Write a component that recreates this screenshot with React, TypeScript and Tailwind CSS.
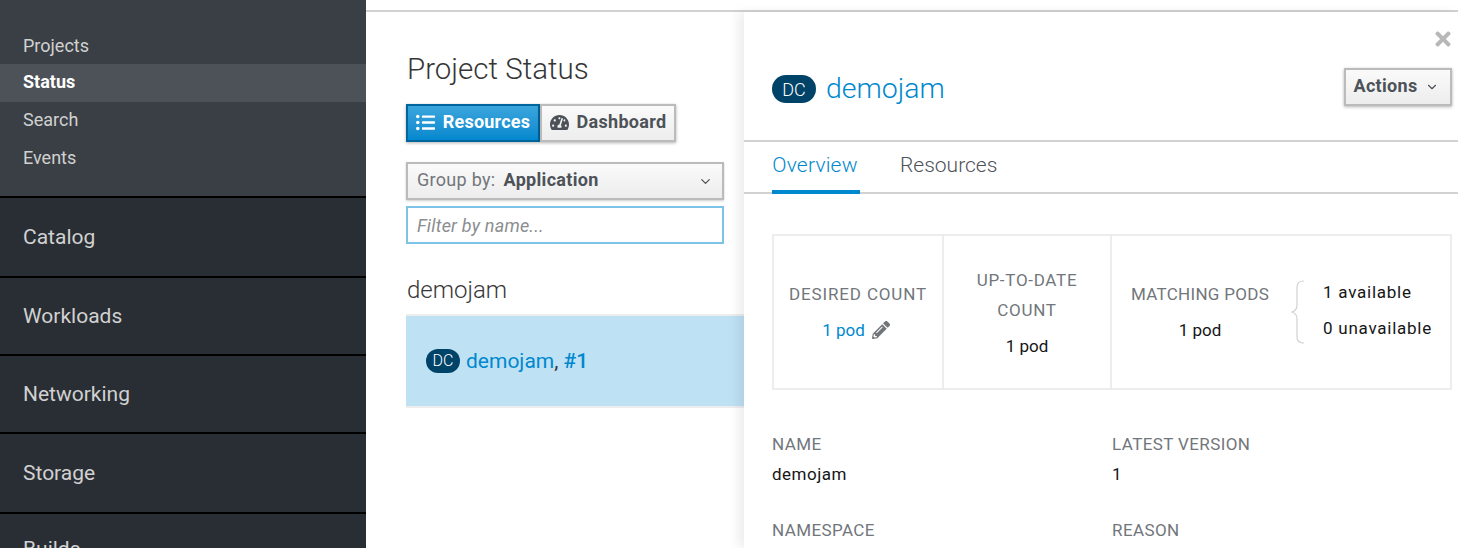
import React from 'react'
import { FaListUl, FaPencilAlt, FaTachometerAlt, FaTimes } from 'react-icons/fa'
import { ChevronDown } from 'lucide-react'

const subItems = ['Projects', 'Status', 'Search', 'Events']
const sections = [
  { name: 'Catalog', height: 'h-[80px]' },
  { name: 'Workloads', height: 'h-[78px]' },
  { name: 'Networking', height: 'h-[78px]' },
  { name: 'Storage', height: 'h-[80px]' },
]

const Badge: React.FC<{ large?: boolean }> = ({ large }) => (
  <span className={`flex items-center justify-center rounded-full bg-[#004368] font-light text-white ${large ? 'h-[28px] w-[44px] text-[18px]' : 'h-[24px] w-[34px] text-[16px]'}`}>
    DC
  </span>
)

const Field: React.FC<{ label: string; value?: string; className?: string }> = ({ label, value, className }) => (
  <div className={className}>
    <div className="text-[17px] leading-[28px] tracking-[0.4px] text-[#72767b]">{label}</div>
    {value && <div className="mt-[2px] text-[17px] leading-[28px] tracking-[0.5px] text-[#151515]">{value}</div>}
  </div>
)

const App: React.FC = () => {
  return (
    <div className="flex h-[548px] w-[1458px] overflow-hidden bg-white font-['Roboto',sans-serif]">
      {/* Sidebar */}
      <aside className="w-[366px] shrink-0 bg-[#292e34] text-[#d1d1d1]">
        <div className="h-[198px] border-b-2 border-black bg-[#393f44] pt-[26px]">
          {subItems.map((item) => (
            <div
              key={item}
              className={`flex h-[38px] items-center pl-[23px] text-[18px] ${item === 'Projects' ? '' : 'pb-[4px]'} ${item === 'Status' ? 'bg-[#4d5258] font-bold text-white' : ''}`}
            >
              {item}
            </div>
          ))}
        </div>
        {sections.map((item) => (
          <div key={item.name} className={`flex items-center border-b-2 border-black pl-[23px] pt-[2px] text-[21px] ${item.height}`}>
            {item.name}
          </div>
        ))}
        <div className="pl-[23px] pt-[21px] text-[21px] leading-[28px]">Builds</div>
      </aside>

      {/* Main area */}
      <main className="flex min-w-0 flex-1 flex-col pt-[10px]">
        <div className="h-[2px] bg-[#d1d1d1]" />
        <div className="flex min-h-0 flex-1">
          {/* Project status column */}
          <section className="w-[378px] shrink-0 pl-[40px]">
            <h1 className="mt-[38px] pl-[1px] text-[29.5px] font-light leading-[38px] text-[#363636]">Project Status</h1>
            <div className="mt-[16px] flex">
              <button className="flex h-[38px] w-[134px] items-center justify-center gap-[8px] border-2 border-[#00659c] bg-gradient-to-b from-[#39a5dc] to-[#0088ce] pb-[3px] text-[18px] font-bold tracking-[0.2px] text-white shadow-[0_1px_3px_rgba(0,0,0,0.3)]">
                <FaListUl size={19} className="mt-[2px]" />
                Resources
              </button>
              <button className="flex h-[38px] w-[136px] items-center justify-center gap-[8px] border-2 border-[#bbbbbb] bg-gradient-to-b from-[#fafafa] to-[#ededed] pb-[3px] text-[18px] font-bold tracking-[0.3px] text-[#4d5258] shadow-[0_1px_3px_rgba(0,0,0,0.3)]">
                <FaTachometerAlt size={19} className="mt-[2px]" />
                Dashboard
              </button>
            </div>
            <div className="mt-[20px] flex h-[38px] w-[318px] items-center border-2 border-[#bbbbbb] bg-gradient-to-b from-[#fafafa] to-[#ededed] pb-[3px] pl-[9px] pr-[9px] text-[18px] shadow-[0_1px_2px_rgba(0,0,0,0.2)]">
              <span className="tracking-[0.3px] text-[#72767b]">Group by:</span>
              <span className="ml-[8px] font-bold tracking-[0.3px] text-[#4d5258]">Application</span>
              <ChevronDown size={15} strokeWidth={2} className="ml-auto mt-[3px] text-[#4d5258]" />
            </div>
            <div className="mt-[6px] flex h-[38px] w-[318px] items-center border-2 border-[#7dc3e8] pl-[9px] text-[18px] italic tracking-[0.2px] text-[#8b8d8f]">
              Filter by name...
            </div>
            <h2 className="mt-[31px] pl-[1px] text-[24px] font-light leading-[30px] text-[#363636]">demojam</h2>
            <div className="mt-[9px] flex h-[94px] items-center gap-[6px] border-y-2 border-[#ededed] bg-[#bee1f4] pl-[20px] text-[21px]">
              <Badge />
              <span className="mt-[2px]">
                <span className="text-[#0088ce]">demojam</span>
                <span className="text-[#363636]">, </span>
                <span className="font-medium text-[#0088ce]">#1</span>
              </span>
            </div>
          </section>

          {/* Detail panel */}
          <section className="relative min-w-0 flex-1 bg-white shadow-[-6px_0_10px_rgba(0,0,0,0.07)]">
            <FaTimes size={22} className="absolute right-[4px] top-[16px] text-[#b8b8b8]" />
            <header className="flex h-[130px] border-b-2 border-[#d1d1d1] pl-[28px] pr-[6px]">
              <div className="mt-[60px] flex h-[34px] items-center gap-[10px] self-start">
                <Badge large />
                <span className="text-[28.5px] font-light text-[#0088ce]">demojam</span>
              </div>
              <button className="ml-auto mt-[56px] flex h-[38px] w-[108px] items-center justify-center gap-[8px] self-start border-2 border-[#bbbbbb] bg-gradient-to-b from-[#fafafa] to-[#ededed] pb-[3px] pr-[3px] text-[18px] font-bold tracking-[0.3px] text-[#4d5258] shadow-[0_1px_3px_rgba(0,0,0,0.3)]">
                Actions
                <ChevronDown size={14} className="mt-[3px]" />
              </button>
            </header>
            <nav className="flex h-[52px] gap-[40px] border-b-2 border-[#d1d1d1] pl-[28px] text-[21px] font-light">
              <div className="h-[52px] w-[88px] border-b-4 border-[#0088ce] pr-[2px] pt-[8px] text-center tracking-[0.2px] text-[#0088ce]">Overview</div>
              <div className="pt-[8px] text-[#4d5258]">Resources</div>
            </nav>

            <div className="ml-[28px] mr-[6px] mt-[40px] flex h-[156px] border-2 border-[#ededed] text-center">
              <div className="flex w-[170px] flex-col justify-center border-r-2 border-[#ededed]">
                <div className="text-[17px] leading-[36px] tracking-[0.85px] text-[#72767b]">DESIRED COUNT</div>
                <div className="flex items-center justify-center gap-[7px] pr-[4px] text-[17px] leading-[36px] text-[#0088ce]">
                  1 pod
                  <FaPencilAlt size={18} className="text-[#72767b]" />
                </div>
              </div>
              <div className="flex w-[168px] flex-col justify-center border-r-2 border-[#ededed] pt-[4px]">
                <div className="text-[17px] leading-[30px] tracking-[0.7px] text-[#72767b]">UP-TO-DATE<br />COUNT</div>
                <div className="mt-[3px] text-[17px] leading-[36px] text-[#151515]">1 pod</div>
              </div>
              <div className="flex flex-1 items-center">
                <div className="ml-[18px] w-[140px]">
                  <div className="text-[17px] leading-[36px] tracking-[0.3px] text-[#72767b]">MATCHING PODS</div>
                  <div className="text-[17px] leading-[36px] text-[#151515]">1 pod</div>
                </div>
                <svg width="14" height="64" viewBox="0 0 14 64" fill="none" stroke="#d1d1d1" strokeWidth="1.2" className="ml-[21px] shrink-0">
                  <path d="M13 1 C8 1 6 3 6 7 V25 C6 29 4 31 1 32 C4 33 6 35 6 39 V57 C6 61 8 63 13 63" />
                </svg>
                <div className="mb-[4px] ml-[18px] text-left text-[17px] leading-[36px] tracking-[0.75px] text-[#151515]">
                  <div>1 available</div>
                  <div>0 unavailable</div>
                </div>
              </div>
            </div>

            <div className="ml-[28px] mt-[40px] grid grid-cols-[340px_1fr] gap-y-[28px]">
              <Field label="NAME" value="demojam" />
              <Field label="LATEST VERSION" value="1" />
              <Field label="NAMESPACE" />
              <Field label="REASON" />
            </div>
          </section>
        </div>
      </main>
    </div>
  )
}

export default App
